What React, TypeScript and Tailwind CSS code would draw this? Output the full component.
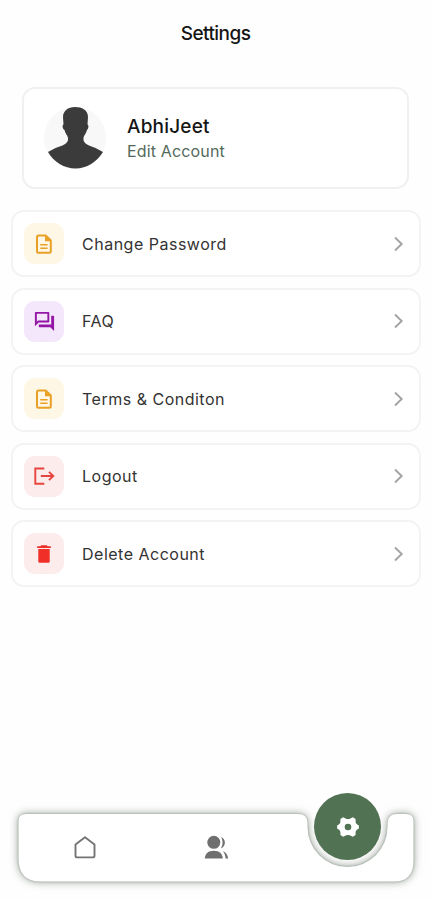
import React from 'react';
import { MdOutlineForum } from 'react-icons/md';

type RowProps = {
  label: string;
  tile: string;
  children: React.ReactNode;
};

function Row({ label, tile, children }: RowProps) {
  return (
    <button className="flex h-[67px] w-full items-center rounded-[13px] border-2 border-[#f3f3f3] bg-white pl-[11px] pr-[14px] text-left">
      <span className={`flex h-[41px] w-[40px] items-center justify-center rounded-[11px] ${tile}`}>
        {children}
      </span>
      <span className="ml-[18px] flex-1 text-[16px] leading-5 tracking-[0.5px] text-[#333333]">
        {label}
      </span>
      <ChevronIcon />
    </button>
  );
}

function ChevronIcon() {
  return (
    <svg viewBox="0 0 12 16" className="h-4 w-3" fill="none" stroke="#a3a3a3" strokeWidth="1.9">
      <path d="M2 1.500 8.700 8 2 14.500" />
    </svg>
  );
}

function DocumentIcon() {
  return (
    <svg viewBox="0 0 24 24" className="size-6" fill="none" stroke="currentColor" strokeWidth="2">
      <path d="M6.500 3.400h7.200l5.100 5.100v10.800a1.500 1.500 0 0 1-1.500 1.500H6.500A1.500 1.500 0 0 1 5 19.300V4.900a1.500 1.500 0 0 1 1.500-1.500Z" />
      <path d="M13 3v6.300h6.200Z" fill="currentColor" stroke="none" />
      <path d="M8.200 12.700h7.400M8.200 16.300h7.400" strokeWidth="1.600" />
    </svg>
  );
}

function LogoutIcon() {
  return (
    <svg viewBox="0 0 24 24" className="size-[24px]" fill="none" stroke="currentColor" strokeWidth="1.9">
      <path d="M12.300 4.500H3.300v15.200h9" />
      <path d="M8.800 12h12M17 7.900l4.300 4.100-4.300 4.100" />
    </svg>
  );
}

function TrashIcon() {
  return (
    <svg viewBox="0 0 24 24" className="size-6" fill="currentColor">
      <path d="M9.300 3.200h5.400l1 1.100h3.100V6H5.200V4.300h3.100Z" />
      <path d="M6.300 7h11.400v12.300a1.500 1.500 0 0 1-1.500 1.500H7.800a1.500 1.500 0 0 1-1.500-1.500Z" />
    </svg>
  );
}

function Avatar() {
  return (
    <svg viewBox="0 0 62 62" className="size-[62px]">
      <circle cx="31" cy="31" r="31" fill="#f8f8f8" />
      <path
        d="M31 0C38 0 44 3 44 10L43.500 17.500C45 18 44.500 22 43 23C42 27 40 28 39.500 31C39 34.500 41 36.500 45 38.500Q53 41 59 45C53 55 42.500 61.500 31.500 61.500C20.500 61.500 9.500 55 4 45Q11 40.500 18.500 38.500C22.500 36.500 24.500 34.500 24 31C23.500 28 21.500 27 20.500 23C18.500 22 18 18 19.500 17.500L19 10C19 4 24 0 31 0Z"
        fill="#3b3b3b"
      />
    </svg>
  );
}

function HomeIcon() {
  return (
    <svg viewBox="0 0 24 24" className="size-6" fill="none" stroke="#747474" strokeWidth="1.9" strokeLinejoin="round">
      <path d="M2.500 9.400 12 2.200l9.500 7.200v11.400a1.600 1.600 0 0 1-1.600 1.600H4.100a1.600 1.600 0 0 1-1.600-1.600Z" />
    </svg>
  );
}

function UsersIcon() {
  return (
    <svg viewBox="0 0 25 25" className="size-[25px]" fill="#6f6f6f">
      <circle cx="9.800" cy="7.300" r="6.500" />
      <path d="M.8 23.500c.3-5 3.600-7.700 9-7.700s8.700 2.700 9 7.700Z" />
      <path d="M16.900 13.200c2.200-3 2.200-8.200.1-11.300 5.200 1.600 5.200 9.700-.1 11.300ZM18.800 16.200c3.200 1 5 3.700 5.300 7.300h-2.500c-.2-3-1-5.200-2.800-7.300Z" />
    </svg>
  );
}

function GearIcon() {
  return (
    <svg viewBox="0 0 24 24" className="size-6">
      <path
        d="M7.200 3.200 9.800 4.600Q12 5.400 14.200 4.600L16.800 3.200 18.700 4.400V7.200Q19.200 9.200 20.800 10.300L22 11V13L20.800 13.700Q19.200 14.800 18.700 16.800V19.600L16.800 20.800 14.200 19.400Q12 18.600 9.800 19.400L7.200 20.800 5.300 19.600V16.800Q4.800 14.800 3.200 13.700L2 13V11L3.200 10.300Q4.800 9.200 5.300 7.200V4.400Z"
        fill="#ffffff"
        stroke="#ffffff"
        strokeWidth="1.800"
        strokeLinejoin="round"
      />
      <circle cx="12" cy="12" r="3.300" fill="#517253" />
    </svg>
  );
}

// Bar outline with the round cut-out under the active tab
function NavShape() {
  return (
    <svg
      viewBox="0 0 431 120"
      className="absolute inset-x-0 top-0 h-[120px] w-full [filter:drop-shadow(0_0_1px_#74787499)_drop-shadow(0_0_4px_#607060a6)]"
    >
      <path
        d="M26 34H298C304 34 307.500 37 307.500 43V47A40 40 0 0 0 387.500 47V44C388 37 391 34 397 34H406Q413.500 34 413.500 41V81Q413.500 101.500 394 101.500H40Q18.500 101.500 18.500 78V41Q18.500 34 26 34Z"
        fill="#ffffff"
      />
    </svg>
  );
}

function App() {
  return (
    <div className="flex h-[900px] w-[431px] flex-col overflow-hidden bg-[#fefefe] font-['Inter',sans-serif]">
      <header className="flex h-[87px] justify-center pt-[22px]">
        <h1 className="text-[19px] font-medium leading-6 tracking-[-0.55px] text-[#151515]">Settings</h1>
      </header>

      <section className="ml-[22px] flex h-[102px] w-[387px] items-center rounded-[13px] border-2 border-[#f0f0f0] bg-white pl-[20px]">
        <Avatar />
        <div className="ml-[21px] flex flex-col pt-px">
          <span className="text-[19px] font-medium leading-6 tracking-[0.2px] text-[#161616]">AbhiJeet</span>
          <span className="text-[16px] leading-6 tracking-[0.15px] text-[#536a5b]">Edit Account</span>
        </div>
      </section>

      <main className="mt-[21px] flex flex-col gap-[10.6px] pl-[11px] pr-[10px]">
        <Row label="Change Password" tile="bg-[#fff7e5] text-[#e9a125]">
          <DocumentIcon />
        </Row>
        <Row label="FAQ" tile="bg-[#f4e7fb] text-[#9416a6]">
          <MdOutlineForum className="size-[23px]" />
        </Row>
        <Row label="Terms &amp; Conditon" tile="bg-[#fff7e5] text-[#e9a125]">
          <DocumentIcon />
        </Row>
        <Row label="Logout" tile="bg-[#fdecec] text-[#e6453f]">
          <LogoutIcon />
        </Row>
        <Row label="Delete Account" tile="bg-[#fdecec] text-[#f03028]">
          <TrashIcon />
        </Row>
      </main>

      <nav className="relative mt-auto h-[120px] w-full">
        <NavShape />
        <div className="relative grid h-full grid-cols-3 pl-[19.500px] pr-[17.500px]">
          <button className="flex justify-center pt-[55px]">
            <HomeIcon />
          </button>
          <button className="flex justify-center pt-[55px]">
            <UsersIcon />
          </button>
          <button className="flex justify-center pt-[13px]">
            <span className="flex size-[67px] items-center justify-center rounded-full bg-[#517253]">
              <GearIcon />
            </span>
          </button>
        </div>
      </nav>
    </div>
  );
}

export default App;
